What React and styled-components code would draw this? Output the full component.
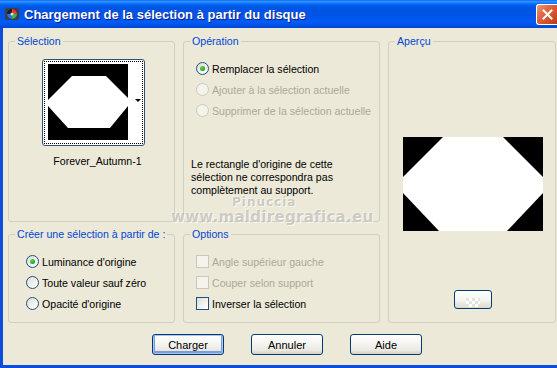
import React from 'react';
import styled, { createGlobalStyle } from 'styled-components';

const GlobalStyle = createGlobalStyle`
  html, body {
    margin: 0;
    padding: 0;
    background: #fff;
  }
  body {
    font-family: "Liberation Sans", Arial, sans-serif;
    font-size: 10.6px;
    color: #000;
  }
`;

const Window = styled.div`
  position: relative;
  width: 557px;
  height: 368px;
  display: flex;
  flex-direction: column;
  overflow: hidden;
  background: #0a4ddf;
`;

const TitleBar = styled.div`
  height: 28px;
  flex: none;
  display: flex;
  align-items: center;
  padding: 0 0 0 4px;
  background: linear-gradient(
    180deg,
    #0058ee 0px,
    #3593ff 1px,
    #288eff 2px,
    #127dff 3px,
    #036ffc 4px,
    #0262ee 5px,
    #0057e5 7px,
    #0054e3 10px,
    #0055eb 17px,
    #005bf5 22px,
    #0050e0 26px,
    #0044cf 28px
  );
`;

const Title = styled.div`
  flex: 1;
  margin-left: 4px;
  color: #fff;
  font: bold 13px "Liberation Sans", Arial, sans-serif;
  text-shadow: 1px 1px 0 #0a1d8c;
  white-space: nowrap;
`;

const CloseButton = styled.div`
  width: 21px;
  height: 21px;
  box-sizing: border-box;
  border: 1px solid #fff;
  border-right: none;
  border-radius: 3px 0 0 3px;
  background: linear-gradient(135deg, #eb9a7c 0%, #e06a45 35%, #cf4a22 75%, #c0391a 100%);
  display: flex;
  align-items: center;
  justify-content: center;
`;

const Client = styled.div`
  flex: 1;
  margin: 0 0 3px 3px;
  padding: 7px 0 0 5px;
  background: #ece9d8;
  display: flex;
  flex-direction: column;
`;

const Groups = styled.div`
  display: grid;
  grid-template-columns: 167px 197px 168px;
  grid-template-rows: 187px 95px;
  column-gap: 8px;
  row-gap: 6px;
`;

const Group = styled.fieldset`
  margin: 0;
  padding: 0;
  min-width: 0;
  box-sizing: border-box;
  border: 1px solid #d0d0bf;
  border-radius: 3px;
  grid-area: ${(p) => p.$area};
`;

const Legend = styled.legend`
  margin-left: 6px;
  padding: 0 2px;
  color: #0046d5;
  line-height: 13px;
`;

const ThumbArea = styled.div`
  display: flex;
  flex-direction: column;
  align-items: center;
  padding: 11px 0 0 4px;
`;

const Thumb = styled.div`
  width: 103px;
  height: 87px;
  box-sizing: border-box;
  border: 1px solid #34507a;
  border-radius: 3px;
  background: #fff;
  padding: 1px;
`;

const Focus = styled.div`
  height: 100%;
  box-sizing: border-box;
  border: 1px dotted #000;
  padding: 2px 0 3px 3px;
  display: flex;
`;

const Strip = styled.div`
  flex: 1;
  display: flex;
  align-items: center;
  justify-content: flex-end;
  padding-right: 1px;
`;

const Arrow = styled.span`
  width: 0;
  height: 0;
  border-left: 3px solid transparent;
  border-right: 3px solid transparent;
  border-top: 3px solid #000;
  margin-top: -4px;
`;

const ThumbName = styled.div`
  margin: 9px 0 0 8px;
  line-height: 13px;
`;

const Options = styled.div`
  padding: 10px 0 0 ${(p) => p.$indent}px;
`;

const Row = styled.label`
  height: 21px;
  display: flex;
  align-items: center;
  gap: 3px;
  color: ${(p) => (p.$disabled ? '#aca899' : '#000')};
  white-space: nowrap;
`;

const Radio = styled.span`
  width: 13px;
  height: 13px;
  flex: none;
  box-sizing: border-box;
  border-radius: 50%;
  border: 1px solid ${(p) => (p.$disabled ? '#cac8bb' : '#1c5180')};
  background: ${(p) =>
    p.$disabled
      ? '#f5f4ea'
      : 'linear-gradient(135deg, #dcdcd7 0%, #f1f1ef 55%, #ffffff 100%)'};
  display: flex;
  align-items: center;
  justify-content: center;

  &::after {
    content: '';
    display: ${(p) => (p.$checked ? 'block' : 'none')};
    width: 5px;
    height: 5px;
    border-radius: 50%;
    background: radial-gradient(circle at 35% 35%, #5ddc59, #21a121 70%);
  }
`;

const Check = styled.span`
  width: 13px;
  height: 13px;
  flex: none;
  box-sizing: border-box;
  border: 1px solid ${(p) => (p.$disabled ? '#cac8bb' : '#1c5180')};
  background: ${(p) =>
    p.$disabled
      ? '#f4f3ee'
      : 'linear-gradient(135deg, #dcdcd7 0%, #f1f1ef 55%, #ffffff 100%)'};
`;

const Note = styled.p`
  margin: 37px 0 0 -5px;
  line-height: 13px;
  width: 180px;
`;

const Preview = styled.div`
  display: flex;
  flex-direction: column;
  align-items: center;
  padding: 89px 0 0 1px;
`;

const SmallButton = styled.div`
  margin-top: 59px;
  width: 38px;
  height: 19px;
  box-sizing: border-box;
  border: 1px solid #003c74;
  border-radius: 3px;
  background: linear-gradient(180deg, #ffffff 0%, #f4f4f0 55%, #dcd8cd 100%);
  display: flex;
  align-items: flex-end;
  justify-content: center;
`;

const Checker = styled.span`
  width: 14px;
  height: 9px;
  margin-bottom: 1px;
  background: repeating-conic-gradient(#ffffff 0 25%, #e6e4dc 0 50%) 0 0 / 6px 6px;
`;

const ButtonRow = styled.div`
  display: flex;
  gap: 27px;
  padding: 11px 0 0 144px;
`;

const Button = styled.button`
  width: 72px;
  height: 21px;
  padding: 0;
  box-sizing: border-box;
  border: 1px solid #003c74;
  border-radius: 3px;
  font: 11px "Liberation Sans", Arial, sans-serif;
  color: #000;
  background: linear-gradient(180deg, #ffffff 0%, #f5f4f0 45%, #ebe9e2 80%, #d6d0c5 100%);
  box-shadow: ${(p) =>
    p.$default ? 'inset 0 0 0 1px #a8c4f0, inset 0 -1px 0 2px #7a9de0' : 'none'};
`;

const Watermark = styled.div`
  position: absolute;
  left: ${(p) => p.$x}px;
  top: ${(p) => p.$y}px;
  font: bold ${(p) => p.$size}px "DejaVu Sans", sans-serif;
  letter-spacing: ${(p) => p.$spacing}px;
  color: rgba(150, 148, 140, 0.45);
  text-shadow: 1px 1px 0 rgba(255, 255, 255, 0.7), -1px -1px 0 rgba(255, 255, 255, 0.4);
  pointer-events: none;
  white-space: nowrap;
`;

const AppIcon = () => (
  <svg width="16" height="16" viewBox="0 0 16 16">
    <rect x="1" y="2" width="14" height="12" rx="2" fill="#3a3f4a" />
    <circle cx="8" cy="8" r="5" fill="#1b1e24" />
    <path d="M8 3 A5 5 0 0 1 13 8 L8 8 Z" fill="#e53a2f" />
    <path d="M13 8 A5 5 0 0 1 8 13 L8 8 Z" fill="#2fb84a" />
    <path d="M8 13 A5 5 0 0 1 3 8 L8 8 Z" fill="#2f6fe0" />
    <circle cx="8" cy="8" r="1.6" fill="#d8d8d8" />
  </svg>
);

const ThumbImage = () => (
  <svg width="80" height="76" viewBox="0 0 80 76">
    <rect width="80" height="76" fill="#000" />
    <polygon points="24,12 58,12 80,34 80,42 62,64 20,64 0,42 0,36" fill="#fff" />
  </svg>
);

const PreviewImage = () => (
  <svg width="140" height="94" viewBox="0 0 140 94">
    <rect width="140" height="94" fill="#000" />
    <polygon points="40,0 100,0 140,40 140,56 104,94 36,94 0,56 0,40" fill="#fff" />
  </svg>
);

const RadioRow = ({ checked, disabled, children }) => (
  <Row $disabled={disabled}>
    <Radio $checked={checked} $disabled={disabled} />
    {children}
  </Row>
);

const CheckRow = ({ disabled, children }) => (
  <Row $disabled={disabled}>
    <Check $disabled={disabled} />
    {children}
  </Row>
);

export default function App() {
  return (
    <>
      <GlobalStyle />
      <Window>
        <TitleBar>
          <AppIcon />
          <Title>Chargement de la sélection à partir du disque</Title>
          <CloseButton>
            <svg width="11" height="11" viewBox="0 0 11 11">
              <path d="M1.5 1.5 L9.5 9.5 M9.5 1.5 L1.5 9.5" stroke="#fff" strokeWidth="2" strokeLinecap="square" />
            </svg>
          </CloseButton>
        </TitleBar>
        <Client>
          <Groups>
            <Group $area="1 / 1 / 2 / 2">
              <Legend>Sélection</Legend>
              <ThumbArea>
                <Thumb>
                  <Focus>
                    <ThumbImage />
                    <Strip>
                      <Arrow />
                    </Strip>
                  </Focus>
                </Thumb>
                <ThumbName>Forever_Autumn-1</ThumbName>
              </ThumbArea>
            </Group>
            <Group $area="1 / 2 / 2 / 3">
              <Legend>Opération</Legend>
              <Options $indent={12}>
                <RadioRow checked>Remplacer la sélection</RadioRow>
                <RadioRow disabled>Ajouter à la sélection actuelle</RadioRow>
                <RadioRow disabled>Supprimer de la sélection actuelle</RadioRow>
                <Note>
                  Le rectangle d'origine de cette
                  <br />
                  sélection ne correspondra pas
                  <br />
                  complètement au support.
                </Note>
              </Options>
            </Group>
            <Group $area="1 / 3 / 3 / 4">
              <Legend>Aperçu</Legend>
              <Preview>
                <PreviewImage />
                <SmallButton>
                  <Checker />
                </SmallButton>
              </Preview>
            </Group>
            <Group $area="2 / 1 / 3 / 2">
              <Legend>Créer une sélection à partir de :</Legend>
              <Options $indent={17}>
                <RadioRow checked>Luminance d'origine</RadioRow>
                <RadioRow>Toute valeur sauf zéro</RadioRow>
                <RadioRow>Opacité d'origine</RadioRow>
              </Options>
            </Group>
            <Group $area="2 / 2 / 3 / 3">
              <Legend>Options</Legend>
              <Options $indent={12}>
                <CheckRow disabled>Angle supérieur gauche</CheckRow>
                <CheckRow disabled>Couper selon support</CheckRow>
                <CheckRow>Inverser la sélection</CheckRow>
              </Options>
            </Group>
          </Groups>
          <ButtonRow>
            <Button $default>Charger</Button>
            <Button>Annuler</Button>
            <Button>Aide</Button>
          </ButtonRow>
        </Client>
        <Watermark $x={232} $y={195} $size={12} $spacing={1}>
          Pinuccia
        </Watermark>
        <Watermark $x={171} $y={208} $size={15} $spacing={0.3}>
          www.maldiregrafica.eu
        </Watermark>
      </Window>
    </>
  );
}
